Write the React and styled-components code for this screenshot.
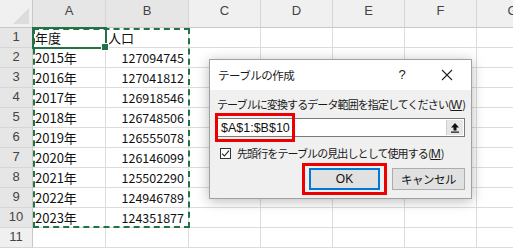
import React from 'react';
import styled, { createGlobalStyle } from 'styled-components';

const GlobalStyle = createGlobalStyle`
  html, body {
    margin: 0;
    padding: 0;
    background: #ffffff;
  }
  body {
    font-family: "Noto Sans CJK JP", "Noto Sans", sans-serif;
  }
`;

const COLS = [33, 73, 83, 72, 72, 72, 72, 72];
const LETTERS = ['A', 'B', 'C', 'D', 'E', 'F', 'G'];

const DATA = [
  ['年度', '人口'],
  ['2015年', '127094745'],
  ['2016年', '127041812'],
  ['2017年', '126918546'],
  ['2018年', '126748506'],
  ['2019年', '126555078'],
  ['2020年', '126146099'],
  ['2021年', '125502290'],
  ['2022年', '124946789'],
  ['2023年', '124351877'],
  ['', ''],
];

const Page = styled.div`
  position: relative;
  width: 513px;
  height: 250px;
  overflow: hidden;
  background: #fff;
`;

const Sheet = styled.div`
  display: grid;
  grid-template-columns: ${COLS.map((c) => `${c}px`).join(' ')};
  grid-template-rows: 28px repeat(11, 20px);
`;

const Corner = styled.div`
  position: relative;
  background: #f0f0f0;
  border-right: 1px solid #c8c8c8;
  border-bottom: 1px solid #c8c8c8;
  box-sizing: border-box;

  &::after {
    content: '';
    position: absolute;
    right: 3px;
    bottom: 3px;
    width: 0;
    height: 0;
    border-left: 16px solid transparent;
    border-bottom: 16px solid #dcdcdc;
  }
`;

const ColHead = styled.div`
  display: flex;
  justify-content: center;
  padding-top: 3px;
  box-sizing: border-box;
  background: ${(p) => (p.$sel ? '#e6e6e6' : '#f0f0f0')};
  border-right: 1px solid #d6d6d6;
  border-bottom: 1px solid #c8c8c8;
  font-family: "Liberation Sans", Arial, sans-serif;
  font-size: 13px;
  color: #444;
`;

const RowHead = styled.div`
  display: flex;
  justify-content: center;
  align-items: center;
  padding-bottom: 3px;
  box-sizing: border-box;
  background: ${(p) => (p.$sel ? '#e6e6e6' : '#f0f0f0')};
  border-right: 1px solid #c8c8c8;
  border-bottom: 1px solid #d6d6d6;
  font-family: "Liberation Sans", Arial, sans-serif;
  font-size: 13px;
  color: #444;
`;

const Cell = styled.div`
  position: relative;
  display: flex;
  align-items: center;
  justify-content: ${(p) => (p.$right ? 'flex-end' : 'flex-start')};
  padding: 0 4px 1px 2px;
  box-sizing: border-box;
  border-right: 1px solid #dcdcdc;
  border-bottom: 1px solid #dcdcdc;
  font-size: ${(p) => (p.$right ? '12.5px' : '13px')};
  color: #111;
  white-space: nowrap;
  ${(p) => p.$active && `
    outline: 2px solid #217346;
    outline-offset: -1px;
    z-index: 2;
  `}
`;

const FillHandle = styled.span`
  position: absolute;
  right: -4px;
  bottom: -4px;
  width: 6px;
  height: 6px;
  background: #217346;
  border: 1px solid #fff;
`;

const Marquee = styled.div`
  position: absolute;
  left: 33px;
  top: 28px;
  width: 157px;
  height: 200px;
  box-sizing: border-box;
  border: 2px dashed #217346;
  pointer-events: none;
`;

const Dialog = styled.div`
  position: absolute;
  left: 209px;
  top: 59px;
  width: 263px;
  height: 140px;
  box-sizing: border-box;
  border: 1px solid #a0a0a0;
  background: #f0f0f0;
  box-shadow: 0 2px 12px rgba(0, 0, 0, 0.28);
  display: flex;
  flex-direction: column;
  font-size: 11px;
  letter-spacing: -0.9px;
  color: #1a1a1a;
`;

const TitleBar = styled.div`
  height: 29px;
  display: flex;
  align-items: center;
  padding: 0 0 1px 8px;
  background: #ffffff;
`;

const Title = styled.span`
  flex: 1;
  font-size: 11.5px;
  letter-spacing: -0.5px;
`;

const TitleButton = styled.span`
  width: ${(p) => p.$w}px;
  display: flex;
  justify-content: center;
  font-family: "Liberation Sans", Arial, sans-serif;
  font-size: 13px;
  letter-spacing: 0;
  color: #222;
`;

const Body = styled.div`
  flex: 1;
  display: flex;
  flex-direction: column;
  padding: 6px 7px 0 7px;
`;

const Label = styled.div`
  line-height: 16px;
  white-space: nowrap;
`;

const Accel = styled.span`
  text-decoration: underline;
  font-family: "Liberation Sans", Arial, sans-serif;
  letter-spacing: 0;
  font-size: 12px;
`;

const InputRow = styled.div`
  position: relative;
  margin-top: 5px;
  height: 19px;
  width: 248px;
  box-sizing: border-box;
  border: 1px solid #7a7a7a;
  background: #fff;
  display: flex;
  align-items: center;
`;

const InputText = styled.span`
  flex: 1;
  padding-left: 3px;
  font-family: "Liberation Sans", Arial, sans-serif;
  font-size: 12.5px;
  letter-spacing: 0;
  color: #111;
`;

const RefButton = styled.span`
  width: 16px;
  height: 15px;
  margin-right: 1px;
  display: flex;
  align-items: center;
  justify-content: center;
  background: #e6e6e6;
  border-left: 1px solid #cfcfcf;
`;

const RedBox = styled.span`
  position: absolute;
  left: ${(p) => p.$left}px;
  top: ${(p) => p.$top}px;
  width: ${(p) => p.$w}px;
  height: ${(p) => p.$h}px;
  box-sizing: border-box;
  border: 3px solid #ee0000;
  pointer-events: none;
`;

const CheckRow = styled.div`
  margin-top: 8px;
  display: flex;
  align-items: center;
  gap: 6px;
  padding-left: 3px;
  white-space: nowrap;
`;

const CheckBox = styled.span`
  width: 11px;
  height: 11px;
  box-sizing: border-box;
  border: 1px solid #333;
  background: #fff;
  display: flex;
  align-items: center;
  justify-content: center;
`;

const ButtonRow = styled.div`
  margin-top: 7px;
  display: flex;
  justify-content: flex-end;
  gap: 5px;
  width: 248px;
`;

const Highlight = styled.span`
  position: relative;
  display: flex;
  padding: 5px 7px;
  margin: -5px 0;
`;

const Button = styled.span`
  width: ${(p) => p.$w}px;
  height: 22px;
  box-sizing: border-box;
  display: flex;
  align-items: center;
  justify-content: center;
  background: #e1e1e1;
  border: 1px solid ${(p) => (p.$primary ? '#0078d7' : '#adadad')};
  ${(p) => p.$primary && 'box-shadow: inset 0 0 0 1px #0078d7;'}
  font-size: 11.5px;
  letter-spacing: -0.5px;
  color: #111;
`;

const OkText = styled.span`
  font-family: "Liberation Sans", Arial, sans-serif;
  font-size: 12px;
  letter-spacing: 0;
`;

const CheckMark = () => (
  <svg width="9" height="9" viewBox="0 0 9 9">
    <path d="M1 4.6 L3.4 7 L8 1.6" fill="none" stroke="#222" strokeWidth="1.1" />
  </svg>
);

const CloseIcon = () => (
  <svg width="12" height="12" viewBox="0 0 12 12">
    <path d="M1 1 L11 11 M11 1 L1 11" stroke="#222" strokeWidth="1.1" />
  </svg>
);

const UpArrow = () => (
  <svg width="10" height="11" viewBox="0 0 10 11">
    <path d="M5 1 L9 5.5 H6.5 V8.5 H3.5 V5.5 H1 Z" fill="#111" />
    <rect x="1" y="9.5" width="8" height="1.2" fill="#111" />
  </svg>
);

const App = () => {
  return (
    <Page>
      <GlobalStyle />
      <Sheet>
        <Corner />
        {LETTERS.map((l, i) => (
          <ColHead key={l} $sel={i < 2}>{l}</ColHead>
        ))}
        {DATA.map((row, r) => (
          <React.Fragment key={r}>
            <RowHead $sel={r < 10}>{r + 1}</RowHead>
            <Cell $active={r === 0}>
              {row[0]}
              {r === 0 && <FillHandle />}
            </Cell>
            <Cell $right={r > 0}>{row[1]}</Cell>
            <Cell />
            <Cell />
            <Cell />
            <Cell />
            <Cell />
          </React.Fragment>
        ))}
      </Sheet>
      <Marquee />

      <Dialog>
        <TitleBar>
          <Title>テーブルの作成</Title>
          <TitleButton $w={40}>?</TitleButton>
          <TitleButton $w={49}>
            <CloseIcon />
          </TitleButton>
        </TitleBar>
        <Body>
          <Label>
            テーブルに変換するデータ範囲を指定してください(<Accel>W</Accel>)
          </Label>
          <InputRow>
            <InputText>$A$1:$B$10</InputText>
            <RefButton>
              <UpArrow />
            </RefButton>
            <RedBox $left={-3} $top={-6} $w={80} $h={29} />
          </InputRow>
          <CheckRow>
            <CheckBox>
              <CheckMark />
            </CheckBox>
            <span>
              先頭行をテーブルの見出しとして使用する(<Accel>M</Accel>)
            </span>
          </CheckRow>
          <ButtonRow>
            <Highlight>
              <Button $primary $w={71}>
                <OkText>OK</OkText>
              </Button>
              <RedBox $left={0} $top={0} $w={85} $h={32} />
            </Highlight>
            <Button $w={73}>キャンセル</Button>
          </ButtonRow>
        </Body>
      </Dialog>
    </Page>
  );
};

export default App;
